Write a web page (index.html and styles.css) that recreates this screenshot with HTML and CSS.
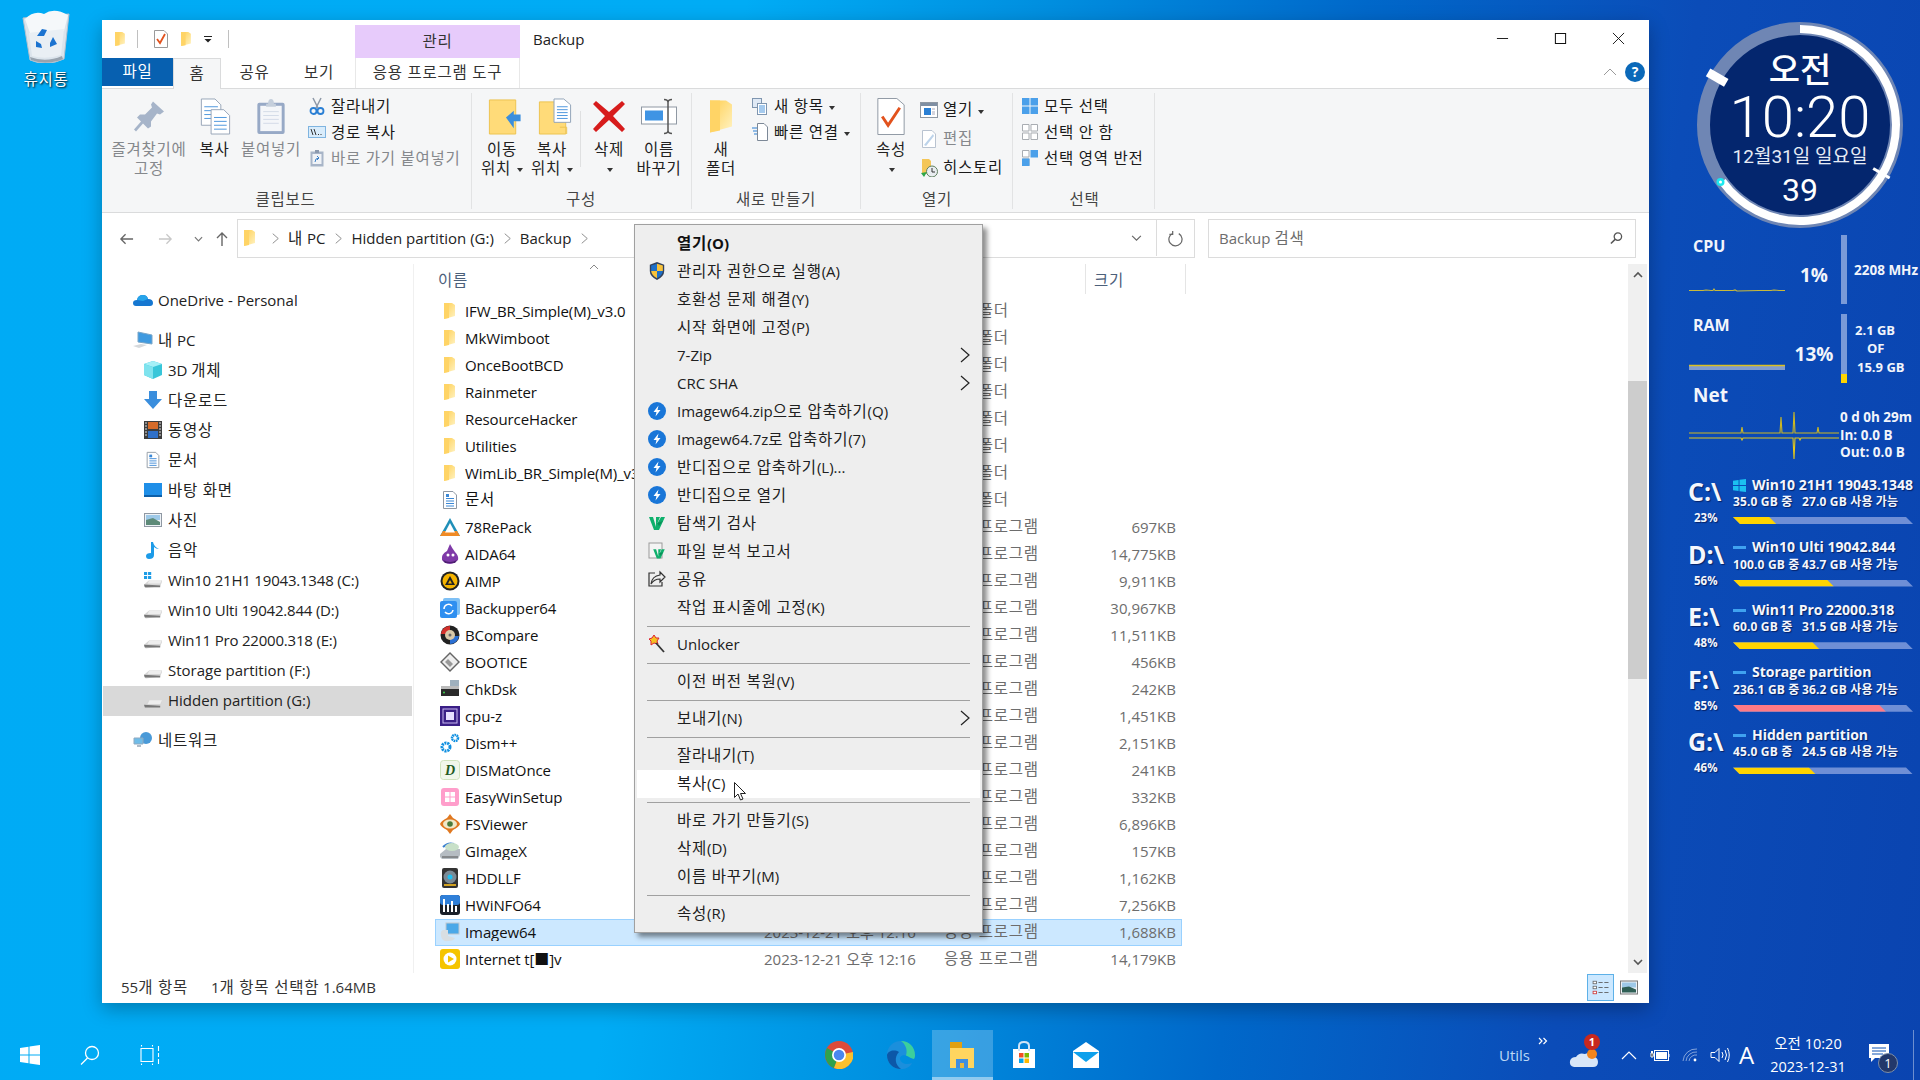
FILE: index.html
```html
<!DOCTYPE html>
<html lang="ko">
<head>
<meta charset="utf-8">
<title>Backup</title>
<link rel="stylesheet" href="styles.css">
</head>
<body>
<svg class="sprite" aria-hidden="true">
  <defs>
    <linearGradient id="gf" x1="0" y1="0" x2="1" y2="1"><stop offset="0" stop-color="#ffce4f"/><stop offset="1" stop-color="#fff3c4"/></linearGradient>
    <symbol id="i-folder" viewBox="0 0 13 18"><path d="M1 1H9L12 3V14L1 17Z" fill="url(#gf)"/><path d="M1 1H6V16L1 17Z" fill="#ffd466"/></symbol>
    <symbol id="i-doc" viewBox="0 0 20 20"><path d="M3.500 1.500H13L16.500 5V18.500H3.500Z" fill="#fff" stroke="#8f98a3"/><path d="M6 6H9M6 8.500H14M6 11H14M6 13.500H14M6 16H14" stroke="#3b88d6"/><path d="M6 4H9V7H6Z" fill="#3b88d6"/></symbol>
    <symbol id="i-drive" viewBox="0 0 20 12"><path d="M0 8L6 3H20V5L18 10L2 12L0 10Z" fill="#d6d6d6"/><path d="M0 8L18 9V11L1 11Z" fill="#777"/><path d="M6 3H20L18 7H4Z" fill="#eee"/></symbol>
    <symbol id="i-bandi" viewBox="0 0 18 18"><circle cx="9" cy="9" r="9" fill="#1976d8"/><path d="M10.500 3.500L5.500 10H8.500L7.500 14.500L12.500 8H9.500Z" fill="#fff"/></symbol>
    <symbol id="i-v3" viewBox="0 0 18 18"><path d="M1 3H5L8 13V3H12L9 10L13 3H17L11 16H6Z" fill="#0eb06c"/><path d="M9 9L15 7L11 12Z" fill="#0a8f58"/></symbol>
    <symbol id="i-chev" viewBox="0 0 10 16"><path d="M1 1L9 8L1 15" fill="none" stroke="#222" stroke-width="1.200"/></symbol>
    <symbol id="i-gray-sel" viewBox="0 0 18 18"><path d="M1.500 1.500H8V8H1.500ZM10 1.500H16.500V8H10ZM1.500 10H8V16.500H1.500ZM10 10H16.500V16.500H10Z" fill="#fff" stroke="#a9adb2"/></symbol>
  </defs>
</svg>

<main class="desktop">
  <div class="recycle">
    <svg class="recycle-icon" viewBox="0 0 48 54">
      <path d="M1 9L47 5L42 50Q24 58 8 51Z" fill="#dbe4ec" stroke="#b5c2cf"/>
      <path d="M3 10Q12 1 22 5Q32 -2 46 6L42 22L8 24Z" fill="#f5f8fa"/>
      <path d="M7 24L42 20L39 46Q24 51 10 47Z" fill="#e9eff4"/>
      <path d="M8 48Q24 54 40 47L41 50Q24 57 9 51Z" fill="#98a3ae"/>
      <path d="M15 27L20 20L25 21L22 27ZM31 28L35 35L28 38V34ZM20 39L14 38L14 32L19 35Z" fill="#1b73d0"/>
    </svg>
    <span class="recycle-label k">휴지통</span>
  </div>

  <section class="window">
    <header class="titlebar">
      <div class="qat">
        <svg class="qat-folder"><use href="#i-folder"/></svg>
        <span class="qat-sep"></span>
        <svg class="qat-check" viewBox="0 0 14 18"><path d="M.500 .500H10L13.500 4V17.500H.500Z" fill="#fff" stroke="#9a9a9a"/><path d="M3 9L6 13L11 4" fill="none" stroke="#e2521d" stroke-width="1.800"/></svg>
        <svg class="qat-folder"><use href="#i-folder"/></svg>
        <svg class="qat-drop" viewBox="0 0 8 7"><path d="M0 .500H8" stroke="#222"/><path d="M.500 3H7.500L4 6.500Z" fill="#222"/></svg>
        <span class="qat-sep"></span>
      </div>
      <div class="manage-tab">관리</div>
      <div class="title-text">Backup</div>
      <div class="win-controls">
        <span class="ctrl"><svg viewBox="0 0 14 14"><path d="M1 7H13" stroke="#111"/></svg></span>
        <span class="ctrl"><svg viewBox="0 0 14 14"><path d="M1.500 1.500H12.500V12.500H1.500Z" fill="none" stroke="#111" stroke-width="1.100"/></svg></span>
        <span class="ctrl"><svg viewBox="0 0 14 14"><path d="M1 1L13 13M13 1L1 13" stroke="#111"/></svg></span>
      </div>
    </header>

    <nav class="tabs">
      <span class="tab tab-file">파일</span>
      <span class="tab tab-home">홈</span>
      <span class="tab tab-share">공유</span>
      <span class="tab tab-view">보기</span>
      <span class="tab tab-tools">응용 프로그램 도구</span>
      <span class="tabs-end">
        <svg class="ribbon-fold" viewBox="0 0 14 8"><path d="M1 7L7 1L13 7" fill="none" stroke="#9a9a9a"/></svg>
        <span class="help">?</span>
      </span>
    </nav>

    <section class="ribbon">
      <div class="group g-clip">
        <div class="group-body">
          <div class="big w74 off"><svg class="big-ico" viewBox="0 0 36 36"><path d="M22 3L33 13L29 16L26 15L20 23L20 28L17 30L12 25L5 33L3 31L10 23L6 19L9 16L14 16L21 9L20 6Z" fill="#a6b4c9"/></svg><span>즐겨찾기에<br>고정</span></div>
          <div class="big w57"><svg class="big-ico" viewBox="0 0 36 38"><path d="M4 1H18L24 7V28H4Z" fill="#fff" stroke="#98a6b8"/><path d="M7 9H21M7 13H21M7 17H21M7 21H21" stroke="#4d96dd"/><path d="M14 12H27L33 18V37H14Z" fill="#fff" stroke="#98a6b8"/><path d="M17 20H30M17 24H30M17 28H30M17 32H30" stroke="#4d96dd"/></svg><span>복사</span></div>
          <div class="big w56 off"><svg class="big-ico" viewBox="0 0 30 38"><rect x="1" y="5" width="28" height="32" rx="2" fill="#97a9c6"/><rect x="4" y="8" width="22" height="26" fill="#f4f6f9"/><path d="M7 14H23M7 18H23M7 22H23M7 26H23" stroke="#d3dbe7"/><path d="M10 6H12Q12 1 15 1Q18 1 18 6H20V9H10Z" fill="#c5cfdc"/></svg><span>붙여넣기</span></div>
          <div class="small-col sc-clip">
            <div class="small"><svg class="small-ico" viewBox="0 0 18 18"><path d="M5 1L10 11M13 1L8 11" stroke="#8e99a8" stroke-width="1.500"/><circle cx="5.500" cy="14" r="3" fill="none" stroke="#2a7fd4" stroke-width="1.800"/><circle cx="12.500" cy="14" r="3" fill="none" stroke="#2a7fd4" stroke-width="1.800"/></svg><span>잘라내기</span></div>
            <div class="small"><svg class="small-ico" viewBox="0 0 18 18"><rect x=".500" y="3.500" width="17" height="11" fill="#d9ecfb" stroke="#7fb4e0"/><path d="M3 6L5 12M6 6L8 12M10 11.500H11M12.500 11.500H13.500" stroke="#333"/></svg><span>경로 복사</span></div>
            <div class="small off"><svg class="small-ico" viewBox="0 0 18 18"><rect x="2.500" y="2.500" width="13" height="15" fill="#a8b5c8"/><rect x="4.500" y="5" width="9" height="10" fill="#f0f3f7"/><path d="M7 13Q7 9 11 9L9 7M11 9L9 11" fill="none" stroke="#3b80c8"/><rect x="7" y="1" width="4" height="3" fill="#8b99ae"/></svg><span>바로 가기 붙여넣기</span></div>
          </div>
        </div>
        <div class="group-label">클립보드</div>
      </div>

      <div class="group g-org">
        <div class="group-body">
          <div class="big w50"><svg class="big-ico shift" viewBox="0 0 34 38"><path d="M1 2H28V37H1Z" fill="#ffdb79" stroke="#edc350"/><path d="M18 20L26 13V17H33V24H26V31Z" fill="#3a8edd"/></svg><span>이동<br>위치 <i class="drop"></i></span></div>
          <div class="big w50"><svg class="big-ico shift" viewBox="0 0 34 38"><path d="M1 4H28V37H1Z" fill="#ffdb79" stroke="#edc350"/><path d="M16 1H26L33 7V25H16Z" fill="#fff" stroke="#92a4b8"/><path d="M19 9H30M19 12H30M19 15H30M19 18H30M19 21H30" stroke="#4d96dd"/><path d="M22 30H29V37" fill="none" stroke="#edc350"/></svg><span>복사<br>위치 <i class="drop"></i></span></div>
          <span class="vsep"></span>
          <div class="big w50"><svg class="big-ico x-ico" viewBox="0 0 32 32"><path d="M3 1L16 12L29 1L32 4L20 16L32 29L29 32L16 20L3 32L0 29L12 16L0 4Z" fill="#d71c1c"/></svg><span>삭제<br><i class="drop"></i></span></div>
          <div class="big w50"><svg class="big-ico" viewBox="0 0 36 36"><rect x=".500" y="8.500" width="35" height="17" fill="#fff" stroke="#8f98a3"/><rect x="4" y="12" width="18" height="10" fill="#3f94e4"/><path d="M23 1Q27 1 27 4V32Q27 35 31 35M31 1Q27 1 27 4M27 32Q27 35 23 35" fill="none" stroke="#555" stroke-width="1.500"/></svg><span>이름<br>바꾸기</span></div>
        </div>
        <div class="group-label">구성</div>
      </div>

      <div class="group g-new">
        <div class="group-body">
          <div class="big w46"><svg class="big-ico nf-ico"><use href="#i-folder"/></svg><span>새<br>폴더</span></div>
          <div class="small-col sc-new">
            <div class="small"><svg class="small-ico" viewBox="0 0 18 18"><rect x="1.500" y="1.500" width="9" height="9" fill="#dfe9f5" stroke="#7f96b0"/><rect x="6.500" y="6.500" width="9" height="11" fill="#fff" stroke="#7f96b0"/><path d="M8 9H14M8 11H14M8 13H14M8 15H14" stroke="#4d96dd"/></svg><span>새 항목 <i class="drop"></i></span></div>
            <div class="small"><svg class="small-ico" viewBox="0 0 18 18"><path d="M6.500 .500H13L16.500 4V17.500H6.500Z" fill="#fff" stroke="#7c8897"/><path d="M1 5H6M2 8H6M3 11H6" stroke="#2a7fd4" stroke-width="1.200"/></svg><span>빠른 연결 <i class="drop"></i></span></div>
          </div>
        </div>
        <div class="group-label">새로 만들기</div>
      </div>

      <div class="group g-open">
        <div class="group-body">
          <div class="big w46"><svg class="big-ico" viewBox="0 0 28 38"><path d="M.500 .500H20L27.500 7V37.500H.500Z" fill="#fff" stroke="#8f98a3"/><path d="M5 19L11 28L23 10" fill="none" stroke="#e2521d" stroke-width="3"/></svg><span>속성<br><i class="drop"></i></span></div>
          <div class="small-col sc-open">
            <div class="small"><svg class="small-ico" viewBox="0 0 18 18"><rect x=".500" y="1.500" width="17" height="15" fill="#fff" stroke="#8f98a3"/><rect x="1" y="2" width="16" height="3" fill="#7f8fa3"/><rect x="4" y="7" width="7" height="7" fill="#2a7fd4"/><path d="M12 8H15M12 11H15M12 13H15" stroke="#aab"/></svg><span>열기 <i class="drop"></i></span></div>
            <div class="small off"><svg class="small-ico" viewBox="0 0 18 18"><path d="M2.500 .500H12L15.500 4V17.500H2.500Z" fill="#fff" stroke="#b9c3d0"/><path d="M4 15L13 4L14 6L6 16Z" fill="#bcd3ea"/></svg><span>편집</span></div>
            <div class="small"><svg class="small-ico" viewBox="0 0 18 18"><path d="M2 0H9L11 2V15H2Z" fill="#f4c658"/><circle cx="12" cy="12.500" r="5.500" fill="#e9edf0" stroke="#5f7f5f"/><path d="M12 9V13H15" fill="none" stroke="#333"/><path d="M1 14L7 13L4 18Z" fill="#2ea64a"/></svg><span>히스토리</span></div>
          </div>
        </div>
        <div class="group-label">열기</div>
      </div>

      <div class="group g-sel">
        <div class="group-body">
          <div class="small-col sc-sel">
            <div class="small"><svg class="small-ico" viewBox="0 0 18 18"><path d="M1 1H8.500V8.500H1ZM9.500 1H17V8.500H9.500ZM1 9.500H8.500V17H1ZM9.500 9.500H17V17H9.500Z" fill="#4ba0ea"/></svg><span>모두 선택</span></div>
            <div class="small"><svg class="small-ico"><use href="#i-gray-sel"/></svg><span>선택 안 함</span></div>
            <div class="small"><svg class="small-ico" viewBox="0 0 18 18"><path d="M1.500 1.500H8V8H1.500ZM1.500 10H8V16.500H1.500Z" fill="#fff" stroke="#a9adb2"/><path d="M9.500 1H17V8.500H9.500ZM1 9.500H8.500V17H1Z" fill="#4ba0ea"/></svg><span>선택 영역 반전</span></div>
          </div>
        </div>
        <div class="group-label">선택</div>
      </div>
    </section>

    <div class="addr-row">
      <div class="addr-nav">
        <svg class="nav-arrow" viewBox="0 0 16 14"><path d="M15 7H2M7 2L2 7L7 12" fill="none" stroke="#666" stroke-width="1.400"/></svg>
        <svg class="nav-arrow" viewBox="0 0 16 14"><path d="M1 7H14M9 2L14 7L9 12" fill="none" stroke="#c8c8c8" stroke-width="1.400"/></svg>
        <svg class="nav-down" viewBox="0 0 10 6"><path d="M1 1L5 5L9 1" fill="none" stroke="#777" stroke-width="1.300"/></svg>
        <svg class="nav-up" viewBox="0 0 14 16"><path d="M7 15V2M2 7L7 2L12 7" fill="none" stroke="#666" stroke-width="1.400"/></svg>
      </div>
      <div class="path">
        <svg class="path-folder"><use href="#i-folder"/></svg>
        <svg class="crumb"><use href="#i-chev"/></svg><span><span class="k">내</span> PC</span>
        <svg class="crumb"><use href="#i-chev"/></svg><span>Hidden partition (G:)</span>
        <svg class="crumb"><use href="#i-chev"/></svg><span>Backup</span>
        <svg class="crumb"><use href="#i-chev"/></svg>
        <span class="path-end">
          <svg class="path-drop" viewBox="0 0 12 8"><path d="M1 1L6 6L11 1" fill="none" stroke="#666" stroke-width="1.300"/></svg>
          <span class="path-refresh"><svg viewBox="0 0 16 18"><path d="M5 3.500A7 7 0 1 0 11.500 3.800M5 1V4.500H1.500" fill="none" stroke="#666" stroke-width="1.300"/></svg></span>
        </span>
      </div>
      <div class="search">
        <span>Backup <span class="k">검색</span></span>
        <svg viewBox="0 0 14 14"><circle cx="8.500" cy="5.500" r="4" fill="none" stroke="#555" stroke-width="1.400"/><path d="M5.500 8.500L1 13" stroke="#555" stroke-width="1.600"/></svg>
      </div>
    </div>

    <div class="content">
      <aside class="navpane">
        <div class="nav-item lvl1"><svg class="nav-ico" viewBox="0 0 20 14"><path d="M3 13Q0 13 0 10Q0 7 4 7Q5 2 10 2Q14 2 15 6Q20 6 20 10Q20 13 17 13Z" fill="#1577d1"/><path d="M4 7Q5 2 10 2Q14 2 15 6L10 8Z" fill="#27a4ea"/></svg><span>OneDrive - Personal</span></div>
        <div class="nav-gap"></div>
        <div class="nav-item lvl1"><svg class="nav-ico" viewBox="0 0 20 18"><path d="M5 1L19 4V13L5 11Z" fill="#3f9ae0" stroke="#7aa6c8"/><path d="M0 15L8 13L14 14L6 17Z" fill="#d6d9dc"/></svg><span><span class="k">내</span> PC</span></div>
        <div class="nav-item"><svg class="nav-ico" viewBox="0 0 18 18"><path d="M9 0L18 3V14L9 18L0 14V3Z" fill="#38c6d9"/><path d="M0 3L9 6L18 3L9 0Z" fill="#a5f0f7"/><path d="M9 6V18L0 14V3Z" fill="#7fe3ee"/></svg><span>3D <span class="k">개체</span></span></div>
        <div class="nav-item"><svg class="nav-ico" viewBox="0 0 18 18"><path d="M5 0H13V8H18L9 18L0 8H5Z" fill="#3a8edd"/></svg><span class="k">다운로드</span></div>
        <div class="nav-item"><svg class="nav-ico" viewBox="0 0 18 18"><rect width="18" height="18" fill="#3c3c3c"/><rect x="4" y="1" width="10" height="7" fill="#d56b2a"/><rect x="4" y="10" width="10" height="7" fill="#2f70c8"/><path d="M1 2H3M1 5H3M1 8H3M1 11H3M1 14H3M15 2H17M15 5H17M15 8H17M15 11H17M15 14H17" stroke="#ddd"/></svg><span class="k">동영상</span></div>
        <div class="nav-item"><svg class="nav-ico"><use href="#i-doc"/></svg><span class="k">문서</span></div>
        <div class="nav-item"><svg class="nav-ico" viewBox="0 0 18 14"><rect width="18" height="14" fill="#1f8fe8"/><rect y="12" width="18" height="2" fill="#0d5fa8"/></svg><span class="k">바탕 화면</span></div>
        <div class="nav-item"><svg class="nav-ico" viewBox="0 0 18 14"><rect x=".500" y=".500" width="17" height="13" fill="#eef2f6" stroke="#8f98a3"/><rect x="2" y="2" width="14" height="5" fill="#9ec9e8"/><path d="M2 7L9 5L16 9V12H2Z" fill="#5d8a78"/></svg><span class="k">사진</span></div>
        <div class="nav-item"><svg class="nav-ico" viewBox="0 0 18 18"><path d="M7 1H9Q10 6 15 8Q12 8 10 6V14Q10 18 5 18Q2 18 2 15Q2 12 7 12Z" fill="#1c9be8"/></svg><span class="k">음악</span></div>
        <div class="nav-item"><svg class="nav-ico" viewBox="0 0 20 18"><use href="#i-drive" width="20" height="12" y="6"/><path d="M0 0H3.500V3.500H0ZM4.500 0H8V3.500H4.500ZM0 4.500H3.500V8H0ZM4.500 4.500H8V8H4.500Z" fill="#1d9ce6"/></svg><span class="tight">Win10 21H1 19043.1348 (C:)</span></div>
        <div class="nav-item"><svg class="nav-ico nav-drv"><use href="#i-drive"/></svg><span class="tight">Win10 Ulti 19042.844 (D:)</span></div>
        <div class="nav-item"><svg class="nav-ico nav-drv"><use href="#i-drive"/></svg><span class="tight">Win11 Pro 22000.318 (E:)</span></div>
        <div class="nav-item"><svg class="nav-ico nav-drv"><use href="#i-drive"/></svg><span>Storage partition (F:)</span></div>
        <div class="nav-item nav-sel"><svg class="nav-ico nav-drv"><use href="#i-drive"/></svg><span>Hidden partition (G:)</span></div>
        <div class="nav-gap"></div>
        <div class="nav-item lvl1"><svg class="nav-ico" viewBox="0 0 20 18"><circle cx="13" cy="7" r="6" fill="#4a9ad8"/><path d="M1 7H10V13H1Z" fill="#6fbce8" stroke="#8fa9c0"/><path d="M4 14H8V16H4Z" fill="#b0bcc8"/></svg><span class="k">네트워크</span></div>
      </aside>

      <div class="filelist">
        <div class="list-head">
          <span class="col-name"><span class="k">이름</span><svg class="sort" viewBox="0 0 10 6"><path d="M1 5L5 1L9 5" fill="none" stroke="#888"/></svg></span>
          <span class="col-date"></span>
          <span class="col-type"></span>
          <span class="col-size"><span class="k">크기</span></span>
        </div>
        <div class="rows">
          <div class="row"><svg class="ficon ffolder"><use href="#i-folder"/></svg><span class="n">IFW_BR_Simple(M)_v3.0</span><span class="d"></span><span class="t">파일 폴더</span><span class="s"></span></div>
          <div class="row"><svg class="ficon ffolder"><use href="#i-folder"/></svg><span class="n">MkWimboot</span><span class="d"></span><span class="t">파일 폴더</span><span class="s"></span></div>
          <div class="row"><svg class="ficon ffolder"><use href="#i-folder"/></svg><span class="n">OnceBootBCD</span><span class="d"></span><span class="t">파일 폴더</span><span class="s"></span></div>
          <div class="row"><svg class="ficon ffolder"><use href="#i-folder"/></svg><span class="n">Rainmeter</span><span class="d"></span><span class="t">파일 폴더</span><span class="s"></span></div>
          <div class="row"><svg class="ficon ffolder"><use href="#i-folder"/></svg><span class="n">ResourceHacker</span><span class="d"></span><span class="t">파일 폴더</span><span class="s"></span></div>
          <div class="row"><svg class="ficon ffolder"><use href="#i-folder"/></svg><span class="n">Utilities</span><span class="d"></span><span class="t">파일 폴더</span><span class="s"></span></div>
          <div class="row"><svg class="ficon ffolder"><use href="#i-folder"/></svg><span class="n">WimLib_BR_Simple(M)_v3.0</span><span class="d"></span><span class="t">파일 폴더</span><span class="s"></span></div>
          <div class="row"><svg class="ficon"><use href="#i-doc"/></svg><span class="n k">문서</span><span class="d"></span><span class="t">파일 폴더</span><span class="s"></span></div>
          <div class="row"><svg class="ficon" viewBox="0 0 20 20"><path d="M10 1L20 19H0Z" fill="#1f8fb8"/><path d="M0 19L3 14H17L20 19Z" fill="#f08a24"/><path d="M5 15.500H15L10 6Z" fill="#fff"/></svg><span class="n">78RePack</span><span class="d"></span><span class="t">응용 프로그램</span><span class="s">697KB</span></div>
          <div class="row"><svg class="ficon" viewBox="0 0 20 20"><path d="M10 0Q12 4 15 8Q19 12 18 16Q14 20 10 20Q5 20 2 16Q1 10 7 7Z" fill="#7f3aa8"/><circle cx="8" cy="11" r="1.500" fill="#fff"/><circle cx="13" cy="11" r="1.500" fill="#fff"/><path d="M3 16Q10 20 17 16L15 19H5Z" fill="#4d2070"/></svg><span class="n">AIDA64</span><span class="d"></span><span class="t">응용 프로그램</span><span class="s">14,775KB</span></div>
          <div class="row"><svg class="ficon" viewBox="0 0 20 20"><circle cx="10" cy="10" r="9.500" fill="#222"/><circle cx="10" cy="10" r="7.500" fill="#f5b400"/><path d="M10 5L15 14H5Z" fill="#222"/><path d="M10 9L12 12.500H8Z" fill="#f5b400"/></svg><span class="n">AIMP</span><span class="d"></span><span class="t">응용 프로그램</span><span class="s">9,911KB</span></div>
          <div class="row"><svg class="ficon" viewBox="0 0 20 20"><rect x="3" y="0" width="17" height="17" rx="2" fill="#7ec0f5"/><rect x="0" y="3" width="17" height="17" rx="2" fill="#2f8ff0"/><path d="M4 11A4.500 4.500 0 0 1 12 8M13 12A4.500 4.500 0 0 1 5 14" fill="none" stroke="#fff" stroke-width="1.500"/></svg><span class="n">Backupper64</span><span class="d"></span><span class="t">응용 프로그램</span><span class="s">30,967KB</span></div>
          <div class="row"><svg class="ficon" viewBox="0 0 20 20"><circle cx="10" cy="10" r="9.500" fill="#222"/><path d="M1 9A9 9 0 0 1 10 1L10 9Z" fill="#d3302a"/><path d="M19 11A9 9 0 0 1 10 19L10 11Z" fill="#2a6fd3"/><circle cx="10" cy="10" r="5" fill="#d8c8a8"/><circle cx="10" cy="10" r="1.500" fill="#666"/></svg><span class="n">BCompare</span><span class="d"></span><span class="t">응용 프로그램</span><span class="s">11,511KB</span></div>
          <div class="row"><svg class="ficon" viewBox="0 0 20 20"><path d="M10 0L20 10L10 20L0 10Z" fill="#666"/><path d="M10 2L18 10L10 18L2 10Z" fill="#eee"/><path d="M8 7L13 12L10 15L5 10Z" fill="#999"/></svg><span class="n">BOOTICE</span><span class="d"></span><span class="t">응용 프로그램</span><span class="s">456KB</span></div>
          <div class="row"><svg class="ficon" viewBox="0 0 20 20"><path d="M10 1H19V7H10Z" fill="#9fb0bd"/><rect x="1" y="7" width="18" height="10" fill="#2a2a2a"/><rect x="1" y="7" width="18" height="3" fill="#bbb"/><circle cx="4" cy="13.500" r="1" fill="#3fd04f"/></svg><span class="n">ChkDsk</span><span class="d"></span><span class="t">응용 프로그램</span><span class="s">242KB</span></div>
          <div class="row"><svg class="ficon" viewBox="0 0 20 20"><rect width="20" height="20" fill="#3a1f86"/><rect x="3" y="3" width="14" height="14" fill="none" stroke="#c7b8f0"/><rect x="6" y="6" width="8" height="8" fill="#e8e0ff"/></svg><span class="n">cpu-z</span><span class="d"></span><span class="t">응용 프로그램</span><span class="s">1,451KB</span></div>
          <div class="row"><svg class="ficon" viewBox="0 0 20 20"><circle cx="6" cy="14" r="4" fill="none" stroke="#0f8fe0" stroke-width="3" stroke-dasharray="2 .8"/><circle cx="15" cy="5" r="3" fill="none" stroke="#0f8fe0" stroke-width="2.500" stroke-dasharray="1.600 .6"/></svg><span class="n">Dism++</span><span class="d"></span><span class="t">응용 프로그램</span><span class="s">2,151KB</span></div>
          <div class="row"><svg class="ficon" viewBox="0 0 20 20"><rect x=".500" y=".500" width="19" height="19" rx="3" fill="#f0f7ea" stroke="#cfe3bd"/><text class="dis-d" x="5" y="15">D</text></svg><span class="n">DISMatOnce</span><span class="d"></span><span class="t">응용 프로그램</span><span class="s">241KB</span></div>
          <div class="row"><svg class="ficon" viewBox="0 0 20 20"><rect x="1" y="1" width="18" height="18" rx="3" fill="#ff9ecb"/><path d="M5 5H9.500V9.500H5ZM10.500 5H15V9.500H10.500ZM5 10.500H9.500V15H5ZM10.500 10.500H15V15H10.500Z" fill="#fff"/></svg><span class="n">EasyWinSetup</span><span class="d"></span><span class="t">응용 프로그램</span><span class="s">332KB</span></div>
          <div class="row"><svg class="ficon" viewBox="0 0 20 20"><path d="M10 0L13 4Q19 7 20 10Q19 13 13 16L10 20L7 16Q1 13 0 10Q1 7 7 4Z" fill="#e07820"/><ellipse cx="10" cy="10" rx="7" ry="4.500" fill="#f0e8c8"/><circle cx="10" cy="10" r="2.800" fill="#4a7a3a"/></svg><span class="n">FSViewer</span><span class="d"></span><span class="t">응용 프로그램</span><span class="s">6,896KB</span></div>
          <div class="row"><svg class="ficon" viewBox="0 0 20 20"><path d="M0 13L6 8H20V14L18 18H2L0 16Z" fill="#b5bcc2"/><path d="M3 6Q8 1 14 3" fill="none" stroke="#3a7fd0" stroke-width="2"/><ellipse cx="12" cy="6" rx="7" ry="4" fill="#c8e0c8"/><path d="M2 16H18" stroke="#555"/></svg><span class="n">GImageX</span><span class="d"></span><span class="t">응용 프로그램</span><span class="s">157KB</span></div>
          <div class="row"><svg class="ficon" viewBox="0 0 20 20"><rect x="2" y="0" width="16" height="20" rx="2" fill="#333"/><circle cx="10" cy="9" r="6.500" fill="#7a8a96"/><circle cx="10" cy="9" r="2.500" fill="#20c0f0"/><rect x="4" y="16" width="12" height="2" fill="#d0a020"/></svg><span class="n">HDDLLF</span><span class="d"></span><span class="t">응용 프로그램</span><span class="s">1,162KB</span></div>
          <div class="row"><svg class="ficon" viewBox="0 0 20 20"><rect width="20" height="20" rx="3" fill="#1a1f28"/><rect y="0" width="20" height="10" rx="3" fill="#2f7fd8"/><path d="M4 4V17M8 9V17M12 6V17M16 11V17" stroke="#fff" stroke-width="2"/></svg><span class="n">HWiNFO64</span><span class="d"></span><span class="t">응용 프로그램</span><span class="s">7,256KB</span></div>
          <div class="row row-sel"><svg class="ficon" viewBox="0 0 20 20"><rect x="6" y="1" width="13" height="11" fill="#4aa8e8" stroke="#bfc8d0"/><path d="M3 8Q0 9 1 14Q2 20 8 19Q14 19 15 16L8 14V8Z" fill="#d8dee2"/></svg><span class="n">Imagew64</span><span class="d">2023-12-21 오후 12:16</span><span class="t">응용 프로그램</span><span class="s">1,688KB</span></div>
          <div class="row"><svg class="ficon" viewBox="0 0 20 20"><rect width="20" height="20" rx="3" fill="#f5c400"/><circle cx="10" cy="10" r="6.500" fill="#fff"/><path d="M8 6.500L14 10L8 13.500Z" fill="#f5c400"/></svg><span class="n">Internet t[■]v</span><span class="d">2023-12-21 오후 12:16</span><span class="t">응용 프로그램</span><span class="s">14,179KB</span></div>
        </div>
      </div>

      <div class="scrollbar">
        <svg class="sb-arrow" viewBox="0 0 10 7"><path d="M1 6L5 2L9 6" fill="none" stroke="#555" stroke-width="1.600"/></svg>
        <div class="sb-track"><div class="sb-thumb"></div></div>
        <svg class="sb-arrow" viewBox="0 0 10 7"><path d="M1 1L5 5L9 1" fill="none" stroke="#555" stroke-width="1.600"/></svg>
      </div>
    </div>

    <footer class="statusbar">
      <span class="st-count">55<span class="k">개 항목</span></span>
      <span>1<span class="k">개 항목 선택함</span> 1.64MB</span>
      <span class="views">
        <span class="view-btn view-on"><svg viewBox="0 0 20 18"><rect x=".500" y="1.500" width="4" height="3" fill="#fff" stroke="#666"/><rect x=".500" y="7.500" width="4" height="3" fill="#fff" stroke="#666"/><rect x=".500" y="13.500" width="4" height="3" fill="#fff" stroke="#c33"/><path d="M7 3H12M14 3H19M7 9H12M14 9H19M7 15H12M14 15H19" stroke="#555"/></svg></span>
        <span class="view-btn view-off"><svg viewBox="0 0 18 14"><rect x=".500" y=".500" width="17" height="13" fill="#eef2f6" stroke="#777"/><rect x="2" y="2" width="14" height="5" fill="#9ec9e8"/><path d="M2 7L9 6L16 9V12H2Z" fill="#2f5f55"/></svg></span>
      </span>
    </footer>
  </section>

  <div class="menu">
    <div class="mi mi-bold"><span class="mi-ico"></span><span><span class="k">열기</span>(O)</span></div>
    <div class="mi"><span class="mi-ico"><svg viewBox="0 0 18 20"><path d="M9 0L17 3V10Q17 16 9 20Q1 16 1 10V3Z" fill="#33415a"/><path d="M9 2V10H2.500V4ZM9 10H15.500Q15 15 9 18Z" fill="#1d6fc8"/><path d="M9 2L15.500 4V10H9ZM9 10V18Q3 15 2.500 10Z" fill="#f8c23a"/></svg></span><span><span class="k">관리자 권한으로 실행</span>(A)</span></div>
    <div class="mi"><span class="mi-ico"></span><span><span class="k">호환성 문제 해결</span>(Y)</span></div>
    <div class="mi"><span class="mi-ico"></span><span><span class="k">시작 화면에 고정</span>(P)</span></div>
    <div class="mi"><span class="mi-ico"></span><span>7-Zip</span><svg class="mi-chev"><use href="#i-chev"/></svg></div>
    <div class="mi"><span class="mi-ico"></span><span>CRC SHA</span><svg class="mi-chev"><use href="#i-chev"/></svg></div>
    <div class="mi"><span class="mi-ico"><svg><use href="#i-bandi"/></svg></span><span>Imagew64.zip<span class="k">으로 압축하기</span>(Q)</span></div>
    <div class="mi"><span class="mi-ico"><svg><use href="#i-bandi"/></svg></span><span>Imagew64.7z<span class="k">로 압축하기</span>(7)</span></div>
    <div class="mi"><span class="mi-ico"><svg><use href="#i-bandi"/></svg></span><span><span class="k">반디집으로 압축하기</span>(L)...</span></div>
    <div class="mi"><span class="mi-ico"><svg><use href="#i-bandi"/></svg></span><span class="k">반디집으로 열기</span></div>
    <div class="mi"><span class="mi-ico"><svg><use href="#i-v3"/></svg></span><span class="k">탐색기 검사</span></div>
    <div class="mi"><span class="mi-ico"><svg viewBox="0 0 18 18"><rect x="1" y="1" width="13" height="15" fill="#f4f4f4" stroke="#9a9a9a"/><use href="#i-v3" x="4" y="5" width="14" height="13"/></svg></span><span class="k">파일 분석 보고서</span></div>
    <div class="mi"><span class="mi-ico"><svg viewBox="0 0 18 18"><path d="M12 2L17 7L12 12V9Q6 9 3 14Q4 6 12 5Z" fill="none" stroke="#333" stroke-width="1.200"/><path d="M7 3H1V16H14V12" fill="none" stroke="#333" stroke-width="1.200"/></svg></span><span class="k">공유</span></div>
    <div class="mi"><span class="mi-ico"></span><span><span class="k">작업 표시줄에 고정</span>(K)</span></div>
    <div class="msep"></div>
    <div class="mi"><span class="mi-ico"><svg viewBox="0 0 18 18"><path d="M6 0L8 3H11L9 6L10 9L6 8L3 10V6L1 4L4 3Z" fill="#f5c020" stroke="#d23"/><path d="M8 8L16 17" stroke="#333" stroke-width="1.800"/></svg></span><span>Unlocker</span></div>
    <div class="msep"></div>
    <div class="mi"><span class="mi-ico"></span><span><span class="k">이전 버전 복원</span>(V)</span></div>
    <div class="msep"></div>
    <div class="mi"><span class="mi-ico"></span><span><span class="k">보내기</span>(N)</span><svg class="mi-chev"><use href="#i-chev"/></svg></div>
    <div class="msep"></div>
    <div class="mi"><span class="mi-ico"></span><span><span class="k">잘라내기</span>(T)</span></div>
    <div class="mi mi-hi"><span class="mi-ico"></span><span><span class="k">복사</span>(C)</span></div>
    <div class="msep"></div>
    <div class="mi"><span class="mi-ico"></span><span><span class="k">바로 가기 만들기</span>(S)</span></div>
    <div class="mi"><span class="mi-ico"></span><span><span class="k">삭제</span>(D)</span></div>
    <div class="mi"><span class="mi-ico"></span><span><span class="k">이름 바꾸기</span>(M)</span></div>
    <div class="msep"></div>
    <div class="mi"><span class="mi-ico"></span><span><span class="k">속성</span>(R)</span></div>
  </div>
  <svg class="cursor" viewBox="0 0 12 19"><path d="M.500 .500V15.500L4 12L6.500 18L9 17L6.500 11.500H11.500Z" fill="#fff" stroke="#222"/></svg>

  <aside class="clock">
    <svg class="clock-ring" viewBox="0 0 206 206">
      <circle cx="103" cy="103" r="91" fill="#04266e"/>
      <circle cx="103" cy="103" r="96.500" fill="none" stroke="#6f86b4" stroke-width="13"/>
      <path d="M103 7A96 96 0 1 1 25.300 159.400" fill="none" stroke="#fff" stroke-width="8"/>
      <rect x="10" y="51" width="21" height="9" fill="#fff" transform="rotate(30 20 55)"/>
      <rect x="175" y="149.500" width="19" height="3" fill="#fff" transform="rotate(30 184 151)"/>
      <circle cx="23.500" cy="160" r="4" fill="#1ce8f0"/>
      <circle cx="23.500" cy="160" r="1.500" fill="#fff"/>
    </svg>
    <div class="clock-text">
      <div class="ck-ampm">오전</div>
      <div class="ck-time">10:20</div>
      <div class="ck-date">12월31일 일요일</div>
      <div class="ck-sec">39</div>
    </div>
  </aside>

  <aside class="stats">
    <div class="stat">
      <div class="stat-left">
        <span class="stat-title">CPU</span>
        <svg class="stat-graph" viewBox="0 0 96 6"><path d="M0 3.500H14L17 3L22 3.500H24L25 2L26 3.500H44L46 3L48 4L70 3.500H82L85 3L90 3.500H96" fill="none" stroke="#c9b93a" stroke-width="1.200"/></svg>
      </div>
      <span class="stat-pct">1%</span>
      <span class="stat-bar"></span>
      <div class="stat-info stat-one">2208 MHz</div>
    </div>
    <div class="stat">
      <div class="stat-left">
        <span class="stat-title">RAM</span>
        <svg class="stat-graph stat-graph-ram" viewBox="0 0 96 6"><rect y="1" width="96" height="5" fill="#7f9bd0"/><path d="M0 1.500H96" stroke="#dcc020" stroke-width="1.500"/></svg>
      </div>
      <span class="stat-pct">13%</span>
      <span class="stat-bar"><i class="stat-fill"></i></span>
      <div class="stat-info"><span>2.1 GB</span><span class="si-of">OF</span><span class="si-last">15.9 GB</span></div>
    </div>
    <div class="net">
      <div class="net-left">
        <span class="net-title">Net</span>
        <svg class="net-graph" viewBox="0 0 150 54"><path d="M0 25H52L53 19L54 25H91L92 9L93 25H104L105 4L106 25H128L129 19L130 25H150" fill="none" stroke="#cdb822" stroke-width="1.100"/><path d="M0 30H52L53 32L54 30H104L105 51L106 30H110L111 32L112 30H150" fill="none" stroke="#e4c81a" stroke-width="1.100"/></svg>
      </div>
      <div class="net-info"><span>0 d 0h 29m</span><span>In: 0.0 B</span><span>Out: 0.0 B</span></div>
    </div>
  </aside>

  <aside class="drives">
    <div class="drive">
      <div class="drv-left"><span class="drv-letter">C:\</span><span class="drv-pct">23%</span></div>
      <div class="drv-right">
        <div class="drv-name"><svg class="drv-ico" viewBox="0 0 14 14"><path d="M0 2L6 1V6.500H0ZM7 .800L14 0V6.500H7ZM0 7.500H6V13L0 12ZM7 7.500H14V14L7 13.200Z" fill="#1bc0f0"/></svg>Win10 21H1 19043.1348</div>
        <div class="drv-sub"><span class="ds-a">35.0 GB 중</span><span>27.0 GB 사용 가능</span></div>
        <div class="drv-bar"><i class="drv-fill" style="width:24%"></i></div>
      </div>
    </div>
    <div class="drive">
      <div class="drv-left"><span class="drv-letter">D:\</span><span class="drv-pct">56%</span></div>
      <div class="drv-right">
        <div class="drv-name"><span class="drv-dash"></span>Win10 Ulti 19042.844</div>
        <div class="drv-sub"><span class="ds-b">100.0 GB 중</span><span>43.7 GB 사용 가능</span></div>
        <div class="drv-bar"><i class="drv-fill" style="width:56%"></i></div>
      </div>
    </div>
    <div class="drive">
      <div class="drv-left"><span class="drv-letter">E:\</span><span class="drv-pct">48%</span></div>
      <div class="drv-right">
        <div class="drv-name"><span class="drv-dash"></span>Win11 Pro 22000.318</div>
        <div class="drv-sub"><span class="ds-a">60.0 GB 중</span><span>31.5 GB 사용 가능</span></div>
        <div class="drv-bar"><i class="drv-fill" style="width:48%"></i></div>
      </div>
    </div>
    <div class="drive">
      <div class="drv-left"><span class="drv-letter">F:\</span><span class="drv-pct">85%</span></div>
      <div class="drv-right">
        <div class="drv-name"><span class="drv-dash"></span>Storage partition</div>
        <div class="drv-sub"><span class="ds-b">236.1 GB 중</span><span>36.2 GB 사용 가능</span></div>
        <div class="drv-bar"><i class="drv-fill drv-red" style="width:85%"></i></div>
      </div>
    </div>
    <div class="drive">
      <div class="drv-left"><span class="drv-letter">G:\</span><span class="drv-pct">46%</span></div>
      <div class="drv-right">
        <div class="drv-name"><span class="drv-dash"></span>Hidden partition</div>
        <div class="drv-sub"><span class="ds-a">45.0 GB 중</span><span>24.5 GB 사용 가능</span></div>
        <div class="drv-bar"><i class="drv-fill" style="width:46%"></i></div>
      </div>
    </div>
  </aside>

  <footer class="taskbar">
    <div class="tb-left">
      <span class="tb-btn"><svg class="tb-ico" viewBox="0 0 20 20"><path d="M0 3L8.500 1.800V9.500H0ZM9.500 1.600L20 0V9.500H9.500ZM0 10.500H8.500V18.200L0 17ZM9.500 10.500H20V20L9.500 18.400Z" fill="#fff"/></svg></span>
      <span class="tb-btn"><svg class="tb-ico" viewBox="0 0 20 20"><circle cx="12" cy="8" r="6.500" fill="none" stroke="#fff" stroke-width="1.300"/><path d="M7.500 13L1 19.500" stroke="#fff" stroke-width="1.300"/></svg></span>
      <span class="tb-btn"><svg class="tb-ico" viewBox="0 0 20 20"><path d="M1.500 1.500V0M1.500 20V18.500M12.500 1.500V0M12.500 20V18.500M18.500 1V6M18.500 8V12M18.500 14V19M1 3.500H13V16.500H1Z" fill="none" stroke="#fff" stroke-width="1.100"/></svg></span>
    </div>
    <div class="tb-apps">
      <span class="tb-app"><svg class="tb-ico28" viewBox="0 0 28 28"><circle cx="14" cy="14" r="14" fill="#dd4b39"/><path d="M14 14L2 7A14 14 0 0 0 9 27Z" fill="#2fa24c"/><path d="M14 14L28 11A14 14 0 0 1 9 27Z" fill="#fbc02d"/><circle cx="14" cy="14" r="7" fill="#fff"/><circle cx="14" cy="14" r="5.300" fill="#4a87ee"/></svg></span>
      <span class="tb-app"><svg class="tb-ico28" viewBox="0 0 28 28"><path d="M14 0C6 0 0 6 0 14C0 22 6 28 14 28C19 28 23 26 25 22C20 24 14 23 13 18C12.500 15 16 13.500 19 14.500C22 15.500 25 18 27 18C28 16 28 15 28 14C28 6 22 0 14 0Z" fill="#1b8fdc"/><path d="M14 0C22 0 28 6 28 14C28 15 28 16 27 18C25 18 22 15.500 19 14.500C21 8 18 3 14 0Z" fill="#3ccf9c"/><path d="M0 14C0 22 6 28 14 28C8 24 7 16 12 11C7 8 1 10 0 14Z" fill="#0c58a8"/></svg></span>
      <span class="tb-app tb-active"><svg class="tb-ico28" viewBox="0 0 28 28"><rect x="2" y="7" width="24" height="20" fill="#ffd55f"/><rect x="2" y="1" width="12" height="6" fill="#e0a010"/><path d="M8 27V18H20V27H16V22H12V27Z" fill="#3f8fdf"/><rect x="12" y="22" width="4" height="5" fill="#e9b93c"/></svg></span>
      <span class="tb-app"><svg class="tb-ico28" viewBox="0 0 28 28"><path d="M3 8H25V27H3Z" fill="#fff"/><path d="M9 10V5Q9 1 14 1Q19 1 19 5V10" fill="none" stroke="#cfe4f7" stroke-width="2"/><path d="M9 12H13.500V16.500H9Z" fill="#f25022"/><path d="M14.500 12H19V16.500H14.500Z" fill="#7fba00"/><path d="M9 17.500H13.500V22H9Z" fill="#00a4ef"/><path d="M14.500 17.500H19V22H14.500Z" fill="#ffb900"/></svg></span>
      <span class="tb-app"><svg class="tb-ico28" viewBox="0 0 28 28"><path d="M1 10L14 1L27 10V27H1Z" fill="#fff"/><path d="M1 11H27L14 21Z" fill="#0da0ec"/></svg></span>
    </div>
    <div class="tray">
      <span class="tr-utils">Utils</span>
      <svg class="tr-more" viewBox="0 0 10 8"><path d="M1 1L4 4L1 7M5.500 1L8.500 4L5.500 7" fill="none" stroke="#fff" stroke-width="1.200"/></svg>
      <span class="tr-cloud">
        <svg viewBox="0 0 30 22"><path d="M5 21Q0 20 1 15Q2 11 7 11Q10 6 16 8Q20 6 23 10Q29 11 29 16Q29 21 24 21Z" fill="#d8e6f8"/><circle cx="23" cy="8" r="5" fill="#f2851d"/></svg>
        <b class="tr-badge">1</b>
      </span>
      <svg class="tr-chev" viewBox="0 0 16 10"><path d="M1 9L8 2L15 9" fill="none" stroke="#fff" stroke-width="1.200"/></svg>
      <svg class="tr-bat" viewBox="0 0 20 13"><rect x="4.500" y="1.500" width="14" height="10" fill="none" stroke="#fff"/><rect x="6" y="3" width="11" height="7" fill="#fff"/><path d="M1 4H3V8H1ZM3 6H4.500M1.500 2V4M2.500 2V4" stroke="#fff"/><path d="M19 5V8" stroke="#fff"/></svg>
      <svg class="tr-wifi" viewBox="0 0 16 14"><path d="M1 13A13 13 0 0 1 15 1M4 13A10 10 0 0 1 15 4M7 13A7 7 0 0 1 15 7" fill="none" stroke="#fff" stroke-width=".9" opacity=".55"/><circle cx="13" cy="12" r="1.400" fill="#fff"/></svg>
      <svg class="tr-vol" viewBox="0 0 20 16"><path d="M1 5.500H5L9 1.500V14.500L5 10.500H1Z" fill="none" stroke="#fff"/><path d="M12 5Q14 8 12 11M15 3Q18 8 15 13M17.500 1Q21 8 17.500 15" fill="none" stroke="#fff"/></svg>
      <span class="tr-ime">A</span>
      <div class="tr-clock"><span>오전 10:20</span><span>2023-12-31</span></div>
      <span class="tr-notif">
        <svg viewBox="0 0 20 18"><path d="M0 0H20V14H6L2 18V14H0Z" fill="#fff"/><path d="M3 4H17M3 7H17M3 10H14" stroke="#0a50b4"/></svg>
        <b class="tr-nbadge">1</b>
      </span>
      <span class="tr-line"></span>
    </div>
  </footer>
</main>
</body>
</html>
```

FILE: styles.css
```css
* { box-sizing: border-box; }
html, body { margin: 0; height: 100%; overflow: hidden; }
body {
  font: 15px/1.2 "Open Sans", "Noto Sans CJK KR", sans-serif;
  color: #1a1a1a;
}
i { font-style: normal; }
svg { display: block; }
.sprite { position: absolute; width: 0; height: 0; }

/* Hangul runs: the reference's Korean font sets wider than Noto at the same size */
.k, .tab, .manage-tab, .group-label, .big > span, .small > span, .t {
  font-size: 15.5px;
  letter-spacing: .75px;
}
.tight { letter-spacing: -.2px; }

.desktop {
  position: relative;
  width: 1920px;
  height: 1080px;
  overflow: hidden;
  background:
    linear-gradient(98deg, #00abf5 0%, #00acf5 36%, #0090e0 50%, #0068ca 66%, #0b4cb8 82%, #0a44b0 100%);
}

/* desktop icon */
.recycle { position: absolute; left: 14px; top: 9px; width: 64px; display: flex; flex-direction: column; align-items: center; }
.recycle-icon { width: 48px; height: 54px; }
.recycle-label { margin-top: 7px; color: #fff; text-shadow: 1px 1px 2px #000; }

/* window */
.window {
  position: absolute;
  left: 102px; top: 20px;
  width: 1547px; height: 983px;
  display: flex; flex-direction: column;
  background: #fff;
  box-shadow: 0 6px 18px rgba(0, 0, 0, .28);
}
.titlebar { height: 38px; display: flex; align-items: flex-end; flex: none; }
.qat { width: 253px; height: 38px; display: flex; align-items: center; padding-left: 12px; }
.qat-folder { width: 12px; height: 16px; }
.qat-sep { width: 1px; height: 18px; background: #c0c0c0; margin: 0 11px; }
.qat-check { width: 14px; height: 18px; margin: 0 4px 0 5px; }
.qat-check + .qat-folder { margin-left: 8px; }
.qat-drop { width: 8px; height: 7px; margin-left: 12px; margin-right: 5px; }
.manage-tab { width: 165px; height: 33px; background: #e7cbfb; display: flex; align-items: center; justify-content: center; color: #333; }
.title-text { margin-left: 13px; font-size: 15px; color: #222; align-self: center; }
.win-controls { margin-left: auto; margin-right: 2px; height: 38px; display: flex; }
.ctrl { width: 58px; display: flex; align-items: center; justify-content: center; padding-bottom: 2px; }
.ctrl svg { width: 13px; height: 13px; }

.tabs { height: 31px; flex: none; display: flex; align-items: stretch; border-bottom: 1px solid #dadbdc; position: relative; }
.tab { display: flex; align-items: center; justify-content: center; color: #333; height: 30px; padding-bottom: 2px; }
.tab-file { width: 71px; height: 28px; background: #0760b0; color: #fff; }
.tab-home { width: 48px; height: 31px; background: #f5f6f7; border: 1px solid #dadbdc; border-bottom: 0; position: relative; }
.tab-share { width: 67px; }
.tab-view { width: 62px; margin-right: 5px; }
.tab-tools { width: 165px; border-left: 1px solid #e8e8e8; border-right: 1px solid #e8e8e8; }
.tabs-end { margin-left: auto; display: flex; align-items: center; gap: 8px; margin-right: 4px; padding-bottom: 3px; }
.ribbon-fold { width: 14px; height: 8px; }
.help { width: 20px; height: 20px; border-radius: 50%; background: #0b69b9; color: #fff; font-weight: 700; font-size: 14px; line-height: 20px; text-align: center; }

.ribbon { height: 124px; flex: none; display: flex; background: #f5f6f7; border-bottom: 1px solid #dadbdc; }
.group { display: flex; flex-direction: column; justify-content: space-between; border-right: 1px solid #e2e3e4; margin: 4px 0 3px; flex: none; }
.group-body { display: flex; align-items: flex-start; }
.group-label { text-align: center; height: 20px; line-height: 20px; color: #444; }
.g-clip { width: 370px; padding-left: 10px; }
.g-clip .group-label { padding-right: 12px; }
.g-org { width: 220px; padding-left: 5px; }
.g-org .group-label { padding-right: 6px; }
.g-new { width: 169px; padding-left: 6px; }
.g-new .group-label { padding-right: 6px; }
.g-open { width: 152px; padding-left: 7px; }
.g-open .group-label { padding-right: 6px; }
.g-sel { width: 142px; padding-left: 8px; }
.g-sel .group-label { padding-right: 6px; }

.big { display: flex; flex-direction: column; align-items: center; text-align: center; line-height: 19px; flex: none; padding-top: 5px; color: #222; }
.big > span { margin-top: 5px; white-space: nowrap; }
.big-ico { height: 37px; width: 36px; }
.shift { position: relative; left: 3px; }
.x-ico { width: 32px; height: 32px; margin: 2px 0 3px; }
.nf-ico { width: 26px; height: 37px; }
.w74 { width: 74px; } .w57 { width: 57px; } .w56 { width: 56px; } .w50 { width: 50px; } .w46 { width: 46px; }
.off, .off > span { color: #85888c; }
.vsep { width: 7px; height: 56px; margin-top: 18px; flex: none; position: relative; }
.vsep::after { content: ""; position: absolute; left: 3px; top: 0; width: 1px; height: 100%; background: #dfe0e1; }
.drop { display: inline-block; vertical-align: middle; margin-left: 1px; margin-top: 1px; border: 3px solid transparent; border-top: 4px solid #333; border-bottom: 0; }
.small-col { display: flex; flex-direction: column; }
.small { height: 26px; display: flex; align-items: center; gap: 5px; white-space: nowrap; }
.small .drop { margin-left: 0; }
.small-ico { width: 18px; height: 18px; flex: none; }
.sc-clip { margin-left: 9px; }
.sc-new { margin-left: 7px; gap: 0; }
.sc-open { margin-left: 6px; padding-top: 2px; }
.sc-open .small { height: 29px; }

/* address row */
.addr-row { height: 51px; flex: none; display: flex; align-items: center; }
.addr-nav { width: 135px; display: flex; align-items: center; padding-left: 17px; }
.nav-arrow { width: 15px; height: 14px; margin-right: 24px; }
.nav-down { width: 9px; height: 6px; margin-left: -3px; margin-right: 12px; }
.nav-up { width: 14px; height: 16px; }
.path { width: 958px; height: 39px; border: 1px solid #dcdcdc; padding-bottom: 1px; display: flex; align-items: center; color: #222; }
.path-folder { width: 13px; height: 18px; margin: 0 6px 0 5px; }
.crumb { width: 7px; height: 11px; margin: 0 9px 0 10px; flex: none; opacity: .6; }
.path-end { margin-left: auto; height: 100%; display: flex; align-items: center; }
.path-drop { width: 11px; height: 7px; margin-right: 14px; }
.path-refresh { width: 38px; height: 100%; border-left: 1px solid #dcdcdc; display: flex; align-items: center; justify-content: center; }
.path-refresh svg { width: 15px; height: 17px; }
.search { width: 428px; height: 39px; margin-left: 13px; border: 1px solid #dcdcdc; display: flex; align-items: center; justify-content: space-between; padding: 0 12px 1px 10px; color: #6d6d6d; }
.search svg { width: 13px; height: 14px; }

/* content */
.content { height: 709px; flex: none; display: flex; }
.navpane { width: 312px; flex: none; padding: 22px 0 0 1px; border-right: 1px solid #f0f0f0; }
.nav-item { height: 30px; width: 309px; display: flex; align-items: center; padding: 0 0 2px 41px; white-space: nowrap; color: #222; }
.nav-item.lvl1 { padding-left: 30px; }
.nav-ico { width: 18px; height: 18px; margin-right: 6px; flex: none; }
.lvl1 .nav-ico { width: 20px; height: 18px; margin-right: 5px; }
.nav-drv { width: 18px; height: 12px; margin-top: 6px; }
.nav-sel { background: #d9d9d9; }
.nav-gap { height: 10px; }

.filelist { width: 1214px; flex: none; }
.list-head { height: 30px; margin-bottom: 4px; display: flex; color: #4c607a; }
.list-head > span { display: flex; align-items: center; padding: 2px 0 0 8px; border-right: 1px solid #e5e5e5; position: relative; }
.col-name { width: 345px; margin-left: 15px; padding-left: 9px !important; }
.col-date { width: 180px; }
.col-type { width: 132px; }
.col-size { width: 100px; }
.sort { position: absolute; left: 160px; top: 0; width: 10px; height: 6px; }
.rows { display: flex; flex-direction: column; }
.row {
  height: 27px; margin-left: 21px; width: 747px;
  display: grid; grid-template-columns: 20px 304px 180px 136px 96px;
  align-items: center; padding: 0 0 2px 5px;
  white-space: nowrap;
}
.ficon { width: 20px; height: 20px; }
.ffolder { width: 13px; height: 18px; margin-left: 3px; }
.n { padding-left: 5px; overflow: hidden; color: #111; letter-spacing: -.1px; }
.n.k { letter-spacing: .75px; }
.d, .t, .s { color: #6d6d6d; }
.s { text-align: right; }
.row-sel { background: #cce8ff; box-shadow: inset 0 0 0 1px #99d1ff; }
.dis-d { font: italic 700 14px "Liberation Serif", serif; fill: #1f5a1f; }

.scrollbar { width: 19px; flex: none; background: #f0f0f0; display: flex; flex-direction: column; align-items: center; }
.sb-arrow { width: 10px; height: 7px; margin: 7px 0; flex: none; }
.sb-track { flex: 1; width: 100%; padding-top: 96px; }
.sb-thumb { height: 298px; background: #cdcdcd; }

.statusbar { flex: 1; display: flex; align-items: center; padding: 0 11px 2px 19px; color: #333; position: relative; }
.st-count { width: 90px; }
.views { margin-left: auto; display: flex; align-items: center; gap: 6px; }
.view-btn { width: 27px; height: 27px; display: flex; align-items: center; justify-content: center; }
.view-btn svg { width: 18px; height: 15px; }
.view-off { width: 18px; }
.view-on { background: #cce8ff; border: 1px solid #5db1e8; }

/* context menu */
.menu {
  position: absolute; left: 634px; top: 224px;
  width: 349px; height: 709px;
  background: #eee; border: 1px solid #a0a0a0;
  padding: 5px 1px;
  box-shadow: 4px 4px 5px rgba(0, 0, 0, .45);
  color: #202020;
}
.mi { height: 28px; margin: 0 1px; display: flex; align-items: center; white-space: nowrap; padding-right: 10px; padding-bottom: 2px; }
.mi-bold { font-weight: 700; color: #111; }
.mi-hi { background: #fff; }
.mi-ico { width: 40px; flex: none; display: flex; justify-content: center; }
.mi-ico svg { width: 18px; height: 18px; }
.mi-chev { width: 10px; height: 16px; margin-left: auto; }
.msep { height: 9px; margin: 0 11px; position: relative; }
.msep::after { content: ""; position: absolute; left: 0; right: 0; top: 4px; height: 1px; background: #a0a0a0; }
.cursor { position: absolute; left: 734px; top: 782px; width: 12px; height: 19px; }

/* clock widget */
.clock { position: absolute; left: 1697px; top: 22px; width: 206px; height: 206px; }
.clock-ring { position: absolute; inset: 0; width: 206px; height: 206px; }
.clock-text { position: relative; display: flex; flex-direction: column; align-items: center; padding-top: 24px; color: #fff; }
.ck-ampm { height: 44px; font: 500 34px/44px "Noto Sans CJK KR", sans-serif; }
.ck-time { height: 54px; font: 300 58px/54px Roboto, sans-serif; }
.ck-date { height: 24px; margin-top: 1px; font: 400 19px/24px Roboto, "Noto Sans CJK KR", sans-serif; color: #e6ebf5; }
.ck-sec { height: 38px; margin-top: 2px; font: 400 32px/38px Roboto, sans-serif; }

/* stats widget */
.stats { position: absolute; left: 1689px; top: 235px; width: 231px; color: #f2f5fb; font-weight: 700; }
.stat { display: grid; grid-template-columns: 96px 56px 6px 73px; height: 69px; margin-bottom: 10px; }
.stat-left { padding-top: 1px; display: flex; flex-direction: column; position: relative; }
.stat-title { padding-left: 4px; font-size: 16px; line-height: 20px; }
.stat-graph { position: absolute; left: 0; top: 52px; width: 96px; height: 6px; }
.stat-graph-ram { top: 50px; }
.stat-pct { align-self: center; text-align: center; font-size: 19px; margin: 11px 0 0 2px; }
.stat-bar { display: block; height: 69px; background: #7a9ad8; position: relative; }
.stat-fill { position: absolute; left: 0; right: 0; bottom: 0; height: 9px; background: #ffd400; }
.stat-info { padding-left: 8px; display: flex; flex-direction: column; justify-content: center; font-size: 13px; line-height: 18.500px; white-space: nowrap; }
.stat-one { padding-left: 7px; justify-content: flex-start; padding-top: 26px; font-size: 13.500px; }
.si-of { padding-left: 12px; }
.si-last { padding-left: 2px; }
.net { display: grid; grid-template-columns: 151px auto; margin-top: -10px; }
.net-left { display: flex; flex-direction: column; }
.net-title { padding-left: 4px; font-size: 19px; line-height: 25px; }
.net-graph { width: 150px; height: 54px; }
.net-info { padding-top: 26px; font-size: 13.500px; line-height: 17.500px; display: flex; flex-direction: column; white-space: nowrap; }

/* drives widget */
.drives { position: absolute; left: 1688px; top: 476px; width: 228px; display: flex; flex-direction: column; gap: 15.600px; color: #f4f7fd; font-weight: 700; text-shadow: 1px 1px 1px rgba(0, 0, 40, .55); }
.drive { display: grid; grid-template-columns: 45px 183px; height: 47px; }
.drv-left { display: flex; flex-direction: column; margin-top: -2px; }
.drv-letter { font-size: 25px; line-height: 34px; height: 36px; white-space: nowrap; }
.drv-pct { font-size: 11.500px; line-height: 16px; padding-left: 6px; }
.drv-right { display: flex; flex-direction: column; }
.drv-name { height: 18px; display: flex; align-items: center; font-size: 14px; white-space: nowrap; }
.drv-ico { width: 13px; height: 13px; margin-right: 6px; }
.drv-dash { width: 13px; height: 3px; background: #3fa2f0; margin-right: 6px; }
.drv-sub { height: 16px; display: flex; font-size: 12px; line-height: 16px; letter-spacing: .15px; white-space: nowrap; }
.ds-a, .ds-b { width: 69px; }
.drv-bar { height: 7px; margin-top: 7px; width: 180px; background: #6f8fd6; clip-path: polygon(0 0, calc(100% - 7px) 0, 100% 100%, 7px 100%); }
.drv-fill { display: block; height: 100%; background: #ffd400; clip-path: polygon(0 0, calc(100% - 7px) 0, 100% 100%, 0 100%); }
.drv-red { background: #ff7a85; }

/* taskbar */
.taskbar { position: absolute; left: 0; right: 0; bottom: 0; height: 50px; display: flex; align-items: stretch; color: #fff; }
.tb-left { width: 808px; display: flex; flex: none; }
.tb-btn { width: 60px; display: flex; align-items: center; justify-content: center; }
.tb-ico { width: 20px; height: 20px; }
.tb-apps { width: 309px; display: flex; flex: none; }
.tb-app { width: 61.800px; display: flex; align-items: center; justify-content: center; border-bottom: 3px solid transparent; padding-top: 3px; }
.tb-ico28 { width: 28px; height: 28px; }
.tb-active { background: rgba(255, 255, 255, .22); border-bottom-color: rgba(255, 255, 255, .45); }
.tray { margin-left: auto; width: 421px; display: grid; grid-template-columns: 40px 26px 38px 41px 31px 29px 31px 23px 100px 42px 14px 6px; align-items: center; }
.tr-utils { color: #bcd8f5; }
.tr-more { width: 10px; height: 8px; margin: -28px 0 0 -1px; justify-self: start; }
.tr-cloud { position: relative; width: 30px; height: 22px; justify-self: center; margin-top: 3px; }
.tr-cloud svg { width: 30px; height: 22px; }
.tr-badge { position: absolute; left: 15px; top: -12px; width: 16px; height: 16px; border-radius: 50%; background: #c8281e; color: #fff; font-size: 11px; line-height: 16px; text-align: center; font-weight: 700; }
.tr-chev { width: 16px; height: 10px; justify-self: end; margin-right: 7px; }
.tr-bat { width: 20px; height: 13px; justify-self: center; }
.tr-wifi { width: 16px; height: 14px; justify-self: center; }
.tr-vol { width: 20px; height: 16px; justify-self: center; }
.tr-ime { font-size: 24px; text-align: center; line-height: 24px; }
.tr-clock { display: flex; flex-direction: column; align-items: center; font-size: 14.500px; line-height: 23px; }
.tr-notif { position: relative; width: 20px; height: 18px; justify-self: center; margin-top: -4px; }
.tr-notif svg { width: 20px; height: 18px; }
.tr-nbadge { position: absolute; left: 9px; top: 9px; width: 20px; height: 20px; border-radius: 50%; background: #23386a; border: 1px solid #7f8fa8; color: #fff; font-size: 13px; line-height: 18px; text-align: center; font-weight: 400; }
.tr-line { width: 1px; height: 50px; background: rgba(255, 255, 255, .4); justify-self: end; }
```
